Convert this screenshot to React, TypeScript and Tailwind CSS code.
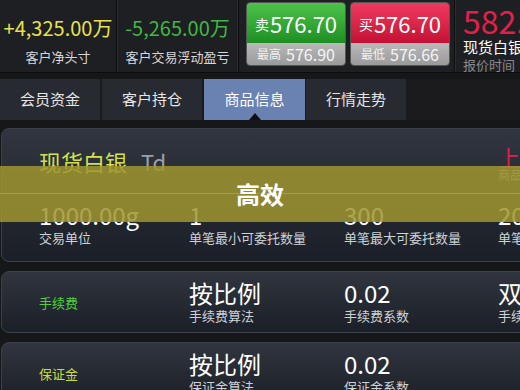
import React from "react";

const font = { fontFamily: '"Noto Sans CJK SC", "Noto Sans", sans-serif' };

const tabs = ["会员资金", "客户持仓", "商品信息", "行情走势"];

const PriceButton = ({
  side,
  price,
  subLabel,
  subPrice,
  tone,
}: {
  side: string;
  price: string;
  subLabel: string;
  subPrice: string;
  tone: "green" | "red";
}) => (
  <div className="w-[100px] h-[64px] shrink-0 rounded-[4px] overflow-hidden flex flex-col border border-[#555]">
    <div
      className={
        tone === "green"
          ? "h-[40px] flex items-center justify-center bg-gradient-to-b from-[#4cc34a] to-[#1d8f22]"
          : "h-[40px] flex items-center justify-center bg-gradient-to-b from-[#f0395f] to-[#c30f34]"
      }
    >
      <span className="text-[14px] text-white mr-[1px] mt-[2px]">{side}</span>
      <span className="text-[22px] text-white leading-none">{price}</span>
    </div>
    <div className="flex-1 flex items-center justify-center gap-[5px] bg-gradient-to-b from-[#b9b9b9] to-[#9a9a9a]">
      <span className="text-[12px] text-[#f2f2f2]">{subLabel}</span>
      <span className="text-[16px] text-[#f6f6f6] leading-none">{subPrice}</span>
    </div>
  </div>
);

const Stat = ({ value, label, w }: { value: string; label: string; w: string }) => (
  <div className={`${w} shrink-0 flex flex-col`}>
    <span className="text-[24px] leading-[26px] text-white whitespace-nowrap">{value}</span>
    <span className="text-[13px] leading-[16px] text-[#cfd2d8] whitespace-nowrap mt-[2px]">
      {label}
    </span>
  </div>
);

export default function App() {
  return (
    <div
      className="relative w-[520px] h-[390px] overflow-hidden bg-[#161719]"
      style={font}
    >
      {/* Top quote bar */}
      <div className="h-[73px] flex bg-[#1e1f23] border-b border-[#0c0c0d]">
        <div className="w-[117px] shrink-0 pt-[10px] flex flex-col items-center justify-center border-r border-[#0e0e10]">
          <span className="text-[20px] leading-[24px] text-[#e8e24e] whitespace-nowrap">+4,325.00万</span>
          <span className="text-[13px] text-[#d8d8d8] mt-[7px]">客户净头寸</span>
        </div>
        <div className="w-[121px] shrink-0 pt-[10px] flex flex-col items-center justify-center border-l border-r border-[#2c2d31]">
          <span className="text-[20px] leading-[24px] text-[#41b843] whitespace-nowrap">-5,265.00万</span>
          <span className="text-[13px] text-[#d8d8d8] mt-[7px] whitespace-nowrap">客户交易浮动盈亏</span>
        </div>
        <div className="w-[217px] shrink-0 flex gap-[4px] pl-[7px] pt-[2px] border-l border-[#0e0e10] border-r">
          <PriceButton side="卖" price="576.70" subLabel="最高" subPrice="576.90" tone="green" />
          <PriceButton side="买" price="576.70" subLabel="最低" subPrice="576.66" tone="red" />
        </div>
        <div className="shrink-0 flex flex-col pl-[7px] border-l border-[#2c2d31]">
          <span className="text-[32px] leading-[36px] text-[#e2204a] mt-[2px] whitespace-nowrap">582.30</span>
          <span className="text-[15px] leading-[18px] text-white whitespace-nowrap">现货白银</span>
          <span className="text-[13px] leading-[18px] text-[#8a8a8a] whitespace-nowrap">报价时间</span>
        </div>
      </div>

      {/* Tabs */}
      <div className="mt-[6px] h-[41px] flex bg-[#1b1b1d]">
        {tabs.map((t, i) => (
          <div
            key={t}
            className={
              i === 2
                ? "relative w-[101px] mr-[1px] flex items-center justify-center bg-[#6a82b2] text-white text-[15px]"
                : "w-[100px] mr-[2px] flex items-center justify-center bg-[#272a31] text-[#e6e6e6] text-[15px]"
            }
          >
            {t}
            {i === 2 && (
              <div className="absolute bottom-0 left-1/2 -translate-x-1/2 w-0 h-0 border-l-[6px] border-r-[6px] border-b-[7px] border-l-transparent border-r-transparent border-b-[#0f1013]" />
            )}
          </div>
        ))}
      </div>

      {/* Cards */}
      <div className="mt-[8px] flex flex-col gap-[9px] pl-[1px]">
        <div className="h-[134px] w-[600px] shrink-0 rounded-[8px] border border-[#3c414b] bg-gradient-to-b from-[#30353f] to-[#1b1f27] pl-[37px] pt-[16px]">
          <div className="flex h-[30px]">
            <div className="w-[459px] shrink-0 flex items-end gap-[14px]">
              <span className="text-[22px] leading-[28px] text-[#d5e04c]">现货白银</span>
              <span className="text-[22px] leading-[28px] text-[#9aa0aa]">Td</span>
            </div>
            <div className="shrink-0 flex flex-col">
              <span className="text-[22px] leading-[22px] text-[#e2204a] whitespace-nowrap">上海</span>
              <span className="text-[12px] leading-[16px] text-[#b0b4ba] whitespace-nowrap">商品代码</span>
            </div>
          </div>
          <div className="flex mt-[27px]">
            <Stat value="1000.00g" label="交易单位" w="w-[150px]" />
            <Stat value="1" label="单笔最小可委托数量" w="w-[155px]" />
            <Stat value="300" label="单笔最大可委托数量" w="w-[154px]" />
            <Stat value="200" label="单笔最大持仓" w="w-[100px]" />
          </div>
        </div>

        <div className="h-[62px] w-[600px] shrink-0 rounded-[8px] border border-[#3c414b] bg-gradient-to-b from-[#30353f] to-[#1b1f27] pl-[37px] flex items-center">
          <span className="w-[150px] shrink-0 text-[13px] text-[#4ed23a] mt-[2px]">手续费</span>
          <Stat value="按比例" label="手续费算法" w="w-[155px]" />
          <Stat value="0.02" label="手续费系数" w="w-[154px]" />
          <Stat value="双边" label="手续费收取" w="w-[100px]" />
        </div>

        <div className="h-[62px] w-[600px] shrink-0 rounded-[8px] border border-[#3c414b] bg-gradient-to-b from-[#30353f] to-[#1b1f27] pl-[37px] flex items-center">
          <span className="w-[150px] shrink-0 text-[13px] text-[#c8de48] mt-[2px]">保证金</span>
          <Stat value="按比例" label="保证金算法" w="w-[155px]" />
          <Stat value="0.02" label="保证金系数" w="w-[154px]" />
        </div>
      </div>

      {/* Overlay banner */}
      <div className="absolute left-0 right-0 top-[166px] h-[56px] bg-[#a09530]/85 flex items-center justify-center">
        <div className="absolute left-0 right-0 top-[27px] h-px bg-[#b5aa45]/70" />
        <span className="relative text-[24px] font-bold text-white">高效</span>
      </div>
    </div>
  );
}
